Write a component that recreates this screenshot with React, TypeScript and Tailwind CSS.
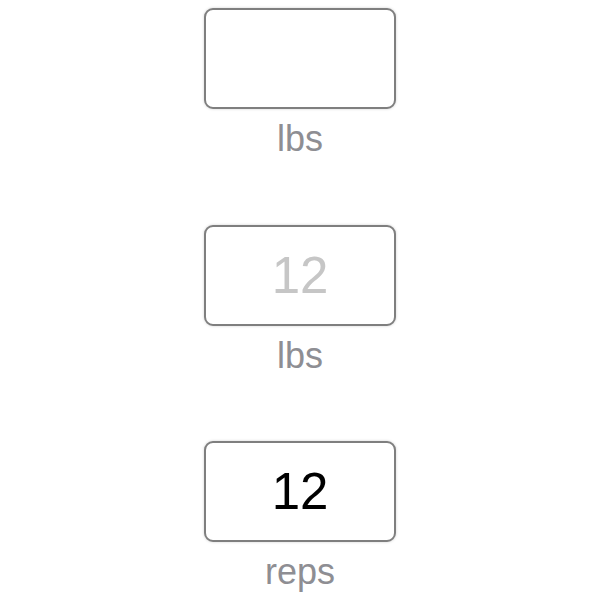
const fields = [
  { value: '', placeholder: '', unit: 'lbs' },
  { value: '', placeholder: '12', unit: 'lbs' },
  { value: '12', placeholder: '', unit: 'reps' },
];

const NumberField = ({ value, placeholder, unit }: { value: string; placeholder: string; unit: string }) => (
  <div className="flex flex-col items-center">
    <div className="flex h-[101px] w-[192px] items-center justify-center rounded-[9px] border-[2.5px] border-[#7f7f7f] bg-white shadow-[0_0_3px_rgba(0,0,0,0.18)]">
      <span className={`text-[51px] leading-none ${value ? 'text-black' : 'text-[#c6c6c6]'}`}>
        {value || placeholder}
      </span>
    </div>
    <div className="mt-[10px] text-[36px] leading-[40px] text-[#8e8e93]">{unit}</div>
  </div>
);

export default function App() {
  return (
    <div
      className="flex min-h-[600px] w-full flex-col items-center gap-[65.5px] bg-white pt-[8px]"
      style={{ fontFamily: '"Liberation Sans", Arial, sans-serif' }}
    >
      {fields.map((f, i) => (
        <NumberField key={i} {...f} />
      ))}
    </div>
  );
}
